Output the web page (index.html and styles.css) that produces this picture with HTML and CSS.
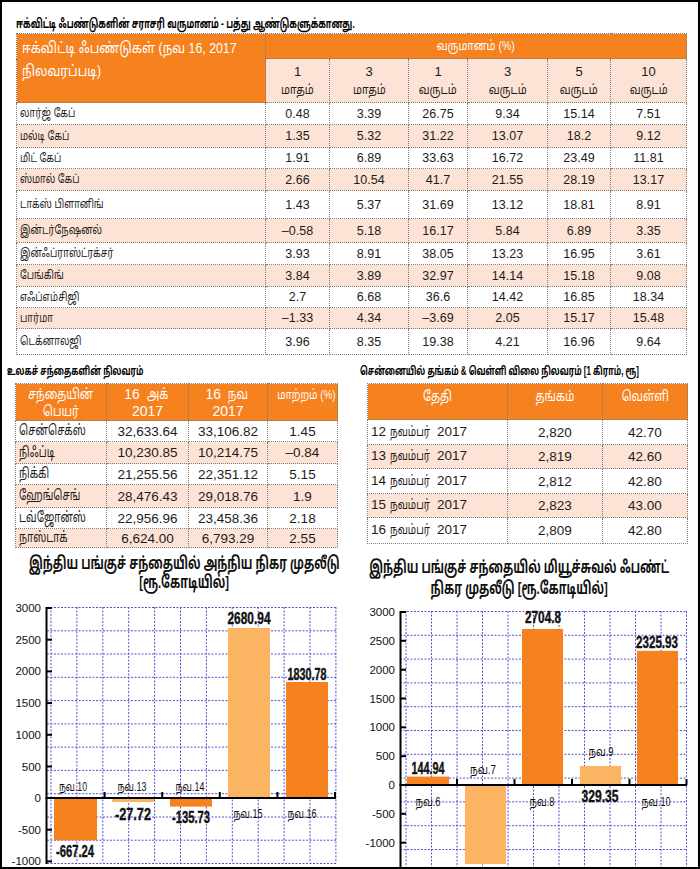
FILE: index.html
```html
<!DOCTYPE html>
<html lang="ta">
<head>
<meta charset="utf-8">
<title>ஈக்விட்டி ஃபண்டுகள்</title>
<link rel="stylesheet" href="styles.css">
</head>
<body>
<div class="frame">
  <section class="top">
    <h1 class="title"><span class="sq sq-title">ஈக்விட்டி ஃபண்டுகளின் சராசரி வருமானம் - பத்து ஆண்டுகளுக்கானது.</span></h1>
    <table class="returns">
      <colgroup>
        <col class="c-name"><col class="c1"><col class="c2"><col class="c3"><col class="c4"><col class="c5"><col class="c6">
      </colgroup>
      <thead>
        <tr class="hr1">
          <th class="corner" rowspan="2"><span class="sq sq-corner">ஈக்விட்டி ஃபண்டுகள் (நவ 16, 2017</span><br><span class="sq sq-corner">நிலவரப்படி)</span></th>
          <th class="group" colspan="6"><span class="sqc">வருமானம் (%)</span></th>
        </tr>
        <tr class="hr2">
          <th class="sub">1<br><span class="sqc">மாதம்</span></th>
          <th class="sub">3<br><span class="sqc">மாதம்</span></th>
          <th class="sub">1<br><span class="sqc">வருடம்</span></th>
          <th class="sub">3<br><span class="sqc">வருடம்</span></th>
          <th class="sub">5<br><span class="sqc">வருடம்</span></th>
          <th class="sub">10<br><span class="sqc">வருடம்</span></th>
        </tr>
      </thead>
      <tbody>
        <tr class="r22"><td><span class="sq">லார்ஜ் கேப்</span></td><td>0.48</td><td>3.39</td><td>26.75</td><td>9.34</td><td>15.14</td><td>7.51</td></tr>
        <tr class="r23 alt"><td><span class="sq">மல்டி கேப்</span></td><td>1.35</td><td>5.32</td><td>31.22</td><td>13.07</td><td>18.2</td><td>9.12</td></tr>
        <tr class="r21"><td><span class="sq">மிட் கேப்</span></td><td>1.91</td><td>6.89</td><td>33.63</td><td>16.72</td><td>23.49</td><td>11.81</td></tr>
        <tr class="r22 alt"><td><span class="sq">ஸ்மால் கேப்</span></td><td>2.66</td><td>10.54</td><td>41.7</td><td>21.55</td><td>28.19</td><td>13.17</td></tr>
        <tr class="r28"><td><span class="sq">டாக்ஸ் பிளானிங்</span></td><td>1.43</td><td>5.37</td><td>31.69</td><td>13.12</td><td>18.81</td><td>8.91</td></tr>
        <tr class="r24 alt"><td><span class="sq">இன்டர்நேஷனல்</span></td><td>–0.58</td><td>5.18</td><td>16.17</td><td>5.84</td><td>6.89</td><td>3.35</td></tr>
        <tr class="r22"><td><span class="sq">இன்ஃப்ராஸ்ட்ரக்சர்</span></td><td>3.93</td><td>8.91</td><td>38.05</td><td>13.23</td><td>16.95</td><td>3.61</td></tr>
        <tr class="r22 alt"><td><span class="sq">பேங்கிங்</span></td><td>3.84</td><td>3.89</td><td>32.97</td><td>14.14</td><td>15.18</td><td>9.08</td></tr>
        <tr class="r21"><td><span class="sq">எஃப்எம்சிஜி</span></td><td>2.7</td><td>6.68</td><td>36.6</td><td>14.42</td><td>16.85</td><td>18.34</td></tr>
        <tr class="r21 alt"><td><span class="sq">பார்மா</span></td><td>–1.33</td><td>4.34</td><td>–3.69</td><td>2.05</td><td>15.17</td><td>15.48</td></tr>
        <tr class="r26"><td><span class="sq">டெக்னாலஜி</span></td><td>3.96</td><td>8.35</td><td>19.38</td><td>4.21</td><td>16.96</td><td>9.64</td></tr>
      </tbody>
    </table>
  </section>

  <section class="lower">
    <div class="block block-world">
      <h2 class="subtitle"><span class="sq sq-sub">உலகச் சந்தைகளின் நிலவரம்</span></h2>
      <table class="mini world">
        <colgroup><col class="w1"><col class="w2"><col class="w3"><col class="w4"></colgroup>
        <thead>
          <tr class="mh1">
            <th><span class="sqc">சந்தையின்</span><br><span class="sqc">பெயர்</span></th>
            <th>16 <span class="sqc">அக்</span><br>2017</th>
            <th>16 <span class="sqc">நவ</span><br>2017</th>
            <th class="chg"><span class="sqc">மாற்றம் (%)</span></th>
          </tr>
        </thead>
        <tbody>
          <tr class="m21"><td><span class="sq sq-mini">சென்செக்ஸ்</span></td><td>32,633.64</td><td>33,106.82</td><td>1.45</td></tr>
          <tr class="m22 alt"><td><span class="sq sq-mini">நிஃப்டி</span></td><td>10,230.85</td><td>10,214.75</td><td>–0.84</td></tr>
          <tr class="m21"><td><span class="sq sq-mini">நிக்கி</span></td><td>21,255.56</td><td>22,351.12</td><td>5.15</td></tr>
          <tr class="m23 alt"><td><span class="sq sq-mini">ஹேங்செங்</span></td><td>28,476.43</td><td>29,018.76</td><td>1.9</td></tr>
          <tr class="m21"><td><span class="sq sq-mini">டவ்ஜோன்ஸ்</span></td><td>22,956.96</td><td>23,458.36</td><td>2.18</td></tr>
          <tr class="m15 alt"><td><span class="sq sq-mini">நாஸ்டாக்</span></td><td>6,624.00</td><td>6,793.29</td><td>2.55</td></tr>
        </tbody>
      </table>
    </div>
    <div class="block block-gold">
      <h2 class="subtitle"><span class="sq sq-sub">சென்னையில் தங்கம் &amp; வெள்ளி விலை நிலவரம் [1 கிராம், ரூ]</span></h2>
      <table class="mini gold">
        <colgroup><col class="g1"><col class="g2"><col class="g3"></colgroup>
        <thead>
          <tr class="gh1"><th><span class="sqc">தேதி</span></th><th><span class="sqc">தங்கம்</span></th><th><span class="sqc">வெள்ளி</span></th></tr>
        </thead>
        <tbody>
          <tr class="g25"><td>12 <span class="sq sq-mini">நவம்பர்</span> 2017</td><td>2,820</td><td>42.70</td></tr>
          <tr class="g24 alt"><td>13 <span class="sq sq-mini">நவம்பர்</span> 2017</td><td>2,819</td><td>42.60</td></tr>
          <tr class="g25"><td>14 <span class="sq sq-mini">நவம்பர்</span> 2017</td><td>2,812</td><td>42.80</td></tr>
          <tr class="g24 alt"><td>15 <span class="sq sq-mini">நவம்பர்</span> 2017</td><td>2,823</td><td>43.00</td></tr>
          <tr class="g26"><td>16 <span class="sq sq-mini">நவம்பர்</span> 2017</td><td>2,809</td><td>42.80</td></tr>
        </tbody>
      </table>
    </div>
  </section>

  <section class="charts">
    <div class="chart chart-left">
      <h2 class="chart-title ct-left"><span class="tl">இந்திய பங்குச் சந்தையில் அந்நிய நிகர முதலீடு</span><span class="tl">[ரூ.கோடியில்]</span></h2>
      <svg class="plot" width="346" height="275" viewBox="2 590 346 275">
        <g class="grid">
          <line x1="51" y1="601" x2="51" y2="857"/><line x1="76.9" y1="601" x2="76.9" y2="857"/><line x1="102.8" y1="601" x2="102.8" y2="857"/><line x1="128.7" y1="601" x2="128.7" y2="857"/><line x1="154.6" y1="601" x2="154.6" y2="857"/><line x1="180.5" y1="601" x2="180.5" y2="857"/><line x1="206.4" y1="601" x2="206.4" y2="857"/><line x1="232.3" y1="601" x2="232.3" y2="857"/><line x1="258.2" y1="601" x2="258.2" y2="857"/><line x1="284.1" y1="601" x2="284.1" y2="857"/><line x1="310" y1="601" x2="310" y2="857"/><line x1="335.9" y1="601" x2="335.9" y2="857"/>
          <line x1="47" y1="601.5" x2="336" y2="601.5"/><line x1="47" y1="624.8" x2="336" y2="624.8"/><line x1="47" y1="648" x2="336" y2="648"/><line x1="47" y1="671.3" x2="336" y2="671.3"/><line x1="47" y1="694.6" x2="336" y2="694.6"/><line x1="47" y1="717.9" x2="336" y2="717.9"/><line x1="47" y1="741.1" x2="336" y2="741.1"/><line x1="47" y1="764.4" x2="336" y2="764.4"/><line x1="47" y1="787.7" x2="336" y2="787.7"/><line x1="47" y1="811" x2="336" y2="811"/><line x1="47" y1="834.2" x2="336" y2="834.2"/><line x1="47" y1="857.5" x2="336" y2="857.5"/>
        </g>
        <g class="bars">
          <rect class="dark" x="54" y="792" width="43" height="42.3"/>
          <rect class="light" x="112" y="792" width="42" height="4"/>
          <rect class="dark" x="170" y="792" width="42" height="8.6"/>
          <rect class="light" x="228" y="622" width="42" height="170"/>
          <rect class="dark" x="286" y="676" width="42" height="116"/>
        </g>
        <g class="axis">
          <line x1="46.5" y1="601" x2="46.5" y2="858"/>
          <line x1="45.5" y1="792" x2="336" y2="792"/>
          <line x1="46" y1="602" x2="52" y2="602"/><line x1="46" y1="633.7" x2="52" y2="633.7"/><line x1="46" y1="665.4" x2="52" y2="665.4"/><line x1="46" y1="697.1" x2="52" y2="697.1"/><line x1="46" y1="728.8" x2="52" y2="728.8"/><line x1="46" y1="760.5" x2="52" y2="760.5"/><line x1="46" y1="823.7" x2="52" y2="823.7"/><line x1="46" y1="855.4" x2="52" y2="855.4"/>
          <line x1="104.6" y1="786" x2="104.6" y2="792"/><line x1="162.2" y1="786" x2="162.2" y2="792"/><line x1="219.8" y1="786" x2="219.8" y2="792"/><line x1="277.4" y1="786" x2="277.4" y2="792"/><line x1="335" y1="786" x2="335" y2="792"/>
        </g>
        <g class="ylab">
          <text x="41" y="606">3000</text><text x="41" y="637.7">2500</text><text x="41" y="669.4">2000</text><text x="41" y="701.1">1500</text><text x="41" y="732.8">1000</text><text x="41" y="764.5">500</text><text x="41" y="796.2">0</text><text x="41" y="827.7">-500</text><text x="41" y="859.4">-1000</text>
        </g>
        <g class="val">
          <text x="75" y="851" textLength="38" lengthAdjust="spacingAndGlyphs">-667.24</text>
          <text x="133" y="814" textLength="36" lengthAdjust="spacingAndGlyphs">-27.72</text>
          <text x="191" y="817" textLength="38" lengthAdjust="spacingAndGlyphs">-135.73</text>
          <text x="249" y="618" textLength="43" lengthAdjust="spacingAndGlyphs">2680.94</text>
          <text x="307" y="674" textLength="39" lengthAdjust="spacingAndGlyphs">1830.78</text>
        </g>
        <g class="cat">
          <text x="73" y="785" textLength="28" lengthAdjust="spacingAndGlyphs">நவ.10</text>
          <text x="132" y="785" textLength="29" lengthAdjust="spacingAndGlyphs">நவ.13</text>
          <text x="190" y="785" textLength="29" lengthAdjust="spacingAndGlyphs">நவ.14</text>
          <text x="248" y="812" textLength="29" lengthAdjust="spacingAndGlyphs">நவ.15</text>
          <text x="302" y="812" textLength="29" lengthAdjust="spacingAndGlyphs">நவ.16</text>
        </g>
      </svg>
    </div>
    <div class="chart chart-right">
      <h2 class="chart-title ct-right"><span class="tl">இந்திய பங்குச் சந்தையில் மியூச்சுவல் ஃபண்ட்</span><span class="tl">நிகர முதலீடு [ரூ.கோடியில்]</span></h2>
      <svg class="plot" width="346" height="275" viewBox="350 590 346 275">
        <g class="grid">
          <line x1="406" y1="605" x2="406" y2="867"/><line x1="431.5" y1="605" x2="431.5" y2="867"/><line x1="457" y1="605" x2="457" y2="867"/><line x1="482.5" y1="605" x2="482.5" y2="867"/><line x1="508" y1="605" x2="508" y2="867"/><line x1="533.5" y1="605" x2="533.5" y2="867"/><line x1="559" y1="605" x2="559" y2="867"/><line x1="584.5" y1="605" x2="584.5" y2="867"/><line x1="610" y1="605" x2="610" y2="867"/><line x1="635.5" y1="605" x2="635.5" y2="867"/><line x1="661" y1="605" x2="661" y2="867"/><line x1="686.5" y1="605" x2="686.5" y2="867"/>
          <line x1="400" y1="605.5" x2="687" y2="605.5"/><line x1="400" y1="629.3" x2="687" y2="629.3"/><line x1="400" y1="653.1" x2="687" y2="653.1"/><line x1="400" y1="676.9" x2="687" y2="676.9"/><line x1="400" y1="700.7" x2="687" y2="700.7"/><line x1="400" y1="724.5" x2="687" y2="724.5"/><line x1="400" y1="748.3" x2="687" y2="748.3"/><line x1="400" y1="772.1" x2="687" y2="772.1"/><line x1="400" y1="795.9" x2="687" y2="795.9"/><line x1="400" y1="819.7" x2="687" y2="819.7"/><line x1="400" y1="843.5" x2="687" y2="843.5"/>
        </g>
        <g class="bars">
          <rect class="dark" x="407" y="770.6" width="42" height="8.4"/>
          <rect class="light" x="465" y="779" width="41" height="79"/>
          <rect class="dark" x="522" y="623" width="41" height="156"/>
          <rect class="light" x="580" y="760" width="41" height="19"/>
          <rect class="dark" x="637" y="644.8" width="41" height="134.2"/>
        </g>
        <g class="axis">
          <line x1="400.5" y1="605" x2="400.5" y2="867"/>
          <line x1="399.5" y1="779" x2="687" y2="779"/>
          <line x1="400" y1="606" x2="406" y2="606"/><line x1="400" y1="634.8" x2="406" y2="634.8"/><line x1="400" y1="663.7" x2="406" y2="663.7"/><line x1="400" y1="692.5" x2="406" y2="692.5"/><line x1="400" y1="721.3" x2="406" y2="721.3"/><line x1="400" y1="750.2" x2="406" y2="750.2"/><line x1="400" y1="807.8" x2="406" y2="807.8"/><line x1="400" y1="836.7" x2="406" y2="836.7"/>
          <line x1="457" y1="773" x2="457" y2="779"/><line x1="514.5" y1="773" x2="514.5" y2="779"/><line x1="572" y1="773" x2="572" y2="779"/><line x1="629.5" y1="773" x2="629.5" y2="779"/><line x1="686.5" y1="773" x2="686.5" y2="779"/>
        </g>
        <g class="ylab">
          <text x="395" y="610">3000</text><text x="395" y="638.8">2500</text><text x="395" y="667.7">2000</text><text x="395" y="696.5">1500</text><text x="395" y="725.3">1000</text><text x="395" y="754.2">500</text><text x="395" y="783">0</text><text x="395" y="811.8">-500</text><text x="395" y="840.7">-1000</text>
        </g>
        <g class="val">
          <text x="428" y="768" textLength="33" lengthAdjust="spacingAndGlyphs">144.94</text>
          <text x="543" y="617" textLength="36" lengthAdjust="spacingAndGlyphs">2704.8</text>
          <text x="600" y="796" textLength="37" lengthAdjust="spacingAndGlyphs">329.35</text>
          <text x="657" y="642" textLength="42" lengthAdjust="spacingAndGlyphs">2325.93</text>
        </g>
        <g class="cat">
          <text x="428" y="800" textLength="25" lengthAdjust="spacingAndGlyphs">நவ.6</text>
          <text x="483" y="768" textLength="26" lengthAdjust="spacingAndGlyphs">நவ.7</text>
          <text x="542" y="800" textLength="25" lengthAdjust="spacingAndGlyphs">நவ.8</text>
          <text x="601" y="750" textLength="25" lengthAdjust="spacingAndGlyphs">நவ.9</text>
          <text x="656" y="800" textLength="29" lengthAdjust="spacingAndGlyphs">நவ.10</text>
        </g>
      </svg>
    </div>
  </section>
</div>
</body>
</html>
```
FILE: styles.css
```css
* { box-sizing: border-box; }

html, body {
  margin: 0;
  padding: 0;
  background: #ffffff;
}

body {
  font-family: "Liberation Sans", "Noto Sans Tamil", "Noto Sans", sans-serif;
  color: #1c1c1c;
}

.frame {
  width: 700px;
  height: 869px;
  border: 2px solid #000;
  overflow: hidden;
  background: #fff;
}

/* condensed text helpers (the source uses a narrow Tamil face) */
.sq {
  display: inline-block;
  white-space: nowrap;
  transform-origin: 0 50%;
  transform: scaleX(0.8);
}

.sqc {
  display: inline-block;
  white-space: nowrap;
  transform-origin: 50% 50%;
  transform: scaleX(0.8);
}

/* ---------- top table ---------- */
.top {
  padding: 14px 11px 0 14px;
}

.title {
  margin: 0;
  height: 17px;
  font-size: 13px;
  line-height: 16px;
  font-weight: bold;
  color: #000;
  white-space: nowrap;
}

.sq-title { transform: scaleX(0.64); }

.returns {
  width: 671px;
  border-collapse: collapse;
  table-layout: fixed;
}

.returns .c-name { width: 249px; }
.returns .c1 { width: 64px; }
.returns .c2 { width: 79px; }
.returns .c3 { width: 59px; }
.returns .c4 { width: 80px; }
.returns .c5 { width: 63px; }
.returns .c6 { width: 76px; }

.returns th,
.returns td {
  border: 1px dotted #7d7d7d;
  padding: 0;
  font-weight: normal;
}

.returns .hr1 { height: 25px; }
.returns .hr2 { height: 44px; }

.returns .corner {
  background: #f5821f;
  color: #fff;
  text-align: left;
  vertical-align: top;
  font-size: 15px;
  line-height: 23px;
  padding: 2px 4px 0 5px;
  white-space: nowrap;
}

.sq-corner { transform: scaleX(0.82); }

.returns .group {
  background: #f5821f;
  color: #fff;
  font-size: 13px;
  text-align: center;
  vertical-align: middle;
}

.returns .sub {
  background: #fce3d5;
  color: #1c1c1c;
  font-size: 13px;
  line-height: 18px;
  text-align: center;
  vertical-align: middle;
}

.returns td {
  font-size: 12.5px;
  text-align: center;
  vertical-align: middle;
}

.returns td:first-child {
  text-align: left;
  padding-left: 3px;
  font-size: 12px;
  white-space: nowrap;
}

.returns td .sq { transform: scaleX(0.78); }

.alt td { background: #fce3d5; }

.r21 { height: 21px; }
.r22 { height: 22px; }
.r23 { height: 23px; }
.r24 { height: 24px; }
.r26 { height: 26px; }
.r28 { height: 28px; }

/* ---------- lower tables ---------- */
.lower {
  display: flex;
  padding-top: 10px;
}

.subtitle {
  margin: 0;
  height: 18px;
  font-size: 12px;
  line-height: 12px;
  font-weight: bold;
  color: #000;
  white-space: nowrap;
}

.sq-sub { transform: scaleX(0.66); }

.block-world {
  width: 348px;
  padding-left: 5px;
}

.block-world .mini { margin-left: 8px; width: 322px; }

.block-gold {
  width: 346px;
  padding-left: 10px;
}

.block-gold .mini { margin-left: 7px; width: 320px; }

.mini {
  border-collapse: collapse;
  table-layout: fixed;
}

.mini th,
.mini td {
  border: 1px dotted #7d7d7d;
  padding: 0;
}

.mini th {
  background: #f5821f;
  color: #fff;
  font-weight: normal;
  font-size: 14px;
  line-height: 17px;
  vertical-align: top;
  text-align: center;
  padding-top: 2px;
  white-space: nowrap;
}

.mini th .sqc { transform: scaleX(0.78); }
.mini th.chg { font-size: 13px; }
.mini th.chg .sqc { transform: scaleX(0.76); }

.mini td {
  font-size: 13.5px;
  text-align: center;
  vertical-align: middle;
  color: #1c1c1c;
  white-space: nowrap;
}

.mini td:first-child {
  text-align: left;
  padding-left: 3px;
}

.world .sq-mini { font-size: 14.5px; transform: scaleX(0.7); }
.gold .sq-mini { font-size: 13.5px; transform: scaleX(0.72); margin-right: -12px; }

.world .w1 { width: 91px; }
.world .w2 { width: 82px; }
.world .w3 { width: 79px; }
.world .w4 { width: 70px; }

.mh1 { height: 37px; }
.m15 { height: 15px; }
.m21 { height: 21px; }
.m22 { height: 22px; }
.m23 { height: 23px; }

.gold .g1 { width: 140px; }
.gold .g2 { width: 95px; }
.gold .g3 { width: 85px; }

.gh1 { height: 36px; }
.gold th { padding-top: 4px; }
.g24 { height: 24px; }
.g25 { height: 25px; }
.g26 { height: 26px; }

/* ---------- charts ---------- */
.charts {
  display: flex;
}

.chart {
  width: 348px;
}

.chart-title {
  margin: 0;
  height: 48px;
  display: flex;
  flex-direction: column;
  align-items: center;
  font-size: 17px;
  font-weight: bold;
  color: #111;
  white-space: nowrap;
}

.tl {
  display: block;
  transform: scaleX(0.66);
  transform-origin: 50% 50%;
}

.ct-left {
  line-height: 19px;
  padding: 6px 0 0 16px;
}

.ct-right {
  line-height: 21px;
  padding: 9px 10px 0 0;
}

.plot {
  display: block;
  overflow: visible;
}

.grid line {
  stroke: #5a4fcf;
  stroke-width: 1;
  stroke-dasharray: 2 1.5;
}

.bars .dark { fill: #f5821f; }
.bars .light { fill: #fbb461; }

.axis line {
  stroke: #000;
  stroke-width: 2;
}

.ylab text {
  font-family: "Liberation Sans", sans-serif;
  font-size: 11.5px;
  fill: #111;
  text-anchor: end;
}

.val text {
  font-family: "Liberation Sans", sans-serif;
  font-weight: bold;
  font-size: 16px;
  fill: #111;
  stroke: #111;
  stroke-width: 0.4px;
  text-anchor: middle;
}

.cat text {
  font-family: "Liberation Sans", "Noto Sans Tamil", sans-serif;
  font-size: 13px;
  fill: #111;
  text-anchor: middle;
}
```
